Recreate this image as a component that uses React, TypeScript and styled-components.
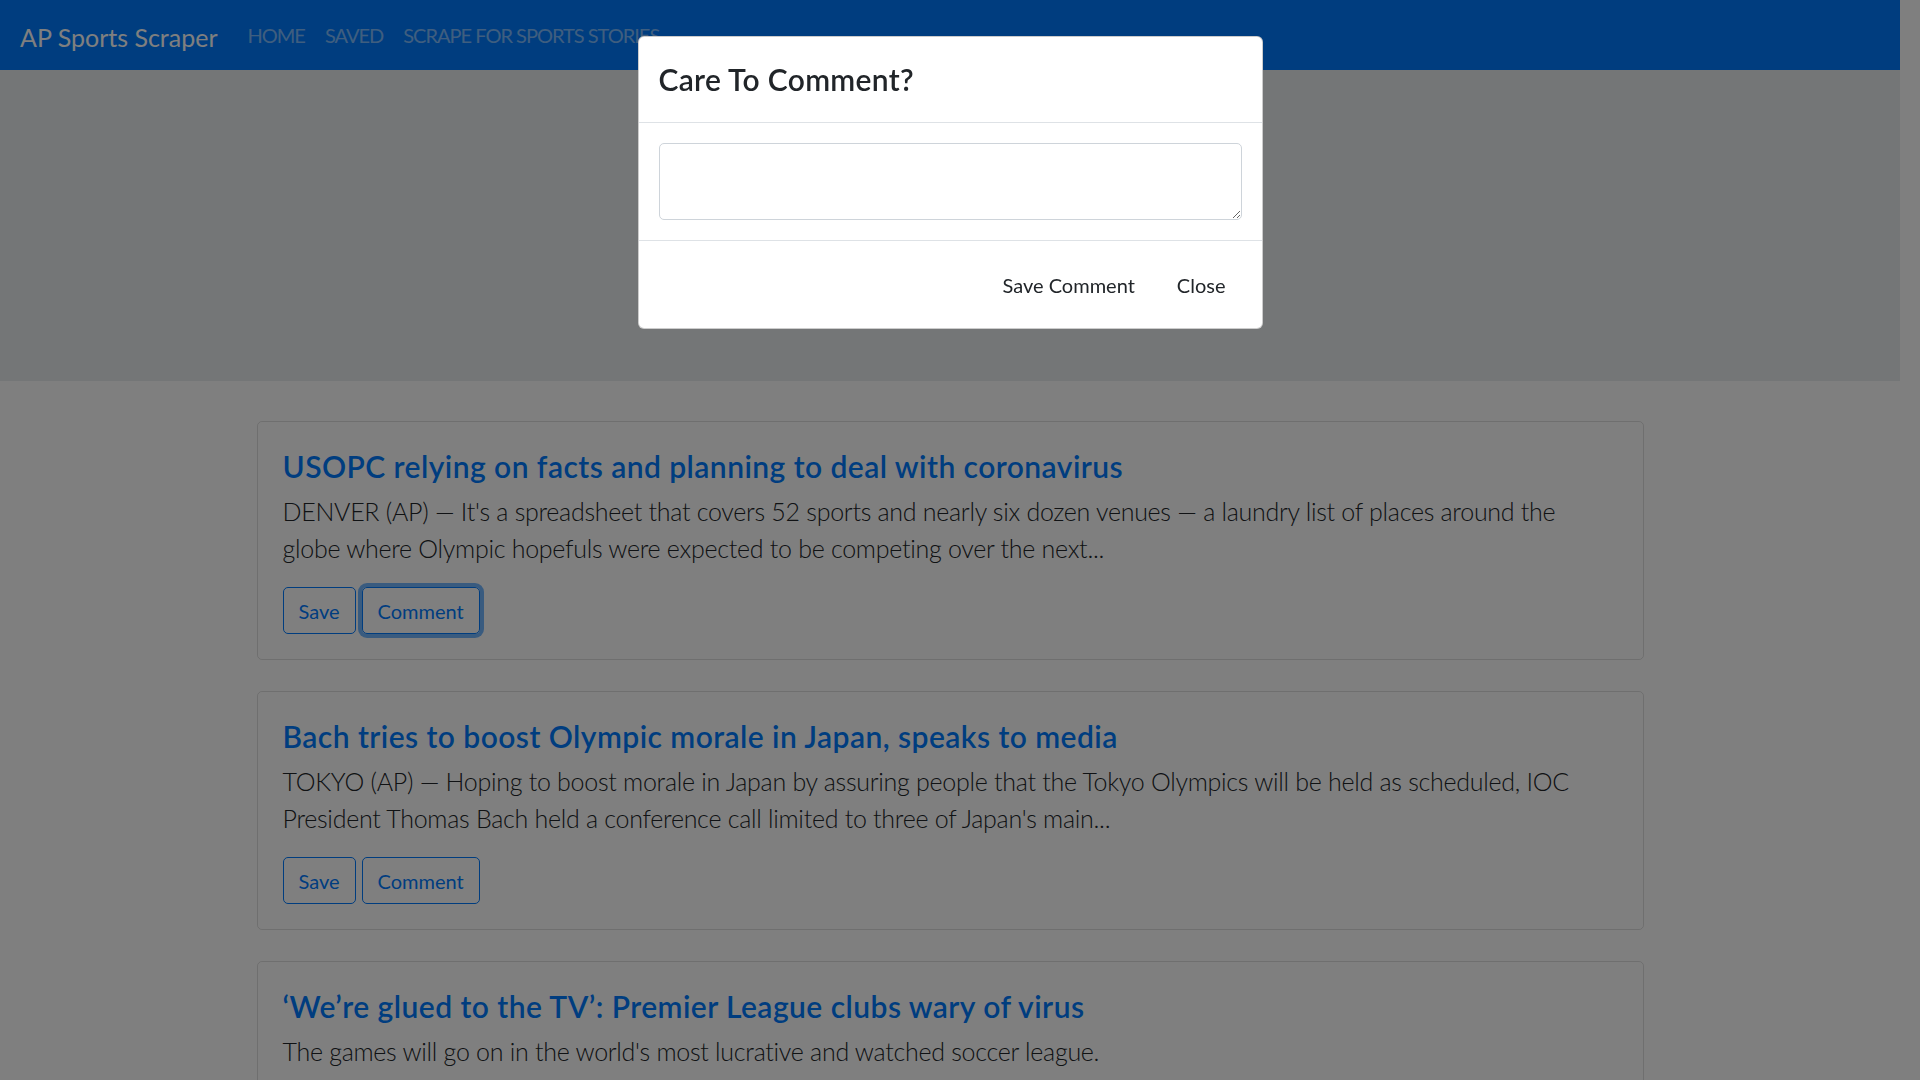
import React from 'react'
import styled, { createGlobalStyle } from 'styled-components'

const GlobalStyle = createGlobalStyle`
  html, body {
    margin: 0;
  }
  body {
    padding-right: 20px;
    overflow: hidden;
    background-color: #fff;
    color: #212529;
    font-family: Lato, 'Open Sans', sans-serif;
    font-size: 20px;
    line-height: 1.5;
  }
`

const stories = [
  {
    id: 1,
    title: 'USOPC relying on facts and planning to deal with coronavirus',
    summary:
      "DENVER (AP) — It's a spreadsheet that covers 52 sports and nearly six dozen venues — a laundry list of places around the globe where Olympic hopefuls were expected to be competing over the next...",
  },
  {
    id: 2,
    title: 'Bach tries to boost Olympic morale in Japan, speaks to media',
    summary:
      "TOKYO (AP) — Hoping to boost morale in Japan by assuring people that the Tokyo Olympics will be held as scheduled, IOC President Thomas Bach held a conference call limited to three of Japan's main...",
  },
  {
    id: 3,
    title: '‘We’re glued to the TV’: Premier League clubs wary of virus',
    summary: "The games will go on in the world's most lucrative and watched soccer league.",
  },
]

const App = () => {
  return (
    <>
      <GlobalStyle />
      <Navbar>
        <Brand href="#">AP Sports Scraper</Brand>
        <NavLink href="#">HOME</NavLink>
        <NavLink href="#">SAVED</NavLink>
        <NavLink href="#">SCRAPE FOR SPORTS STORIES</NavLink>
      </Navbar>
      <Jumbotron />
      <Container>
        {stories.map((item, index) => (
          <Card key={item.id}>
            <StoryTitle href="#">{item.title}</StoryTitle>
            <Lead>{item.summary}</Lead>
            <ButtonRow>
              <OutlineButton>Save</OutlineButton>
              <OutlineButton $focused={index === 0}>Comment</OutlineButton>
            </ButtonRow>
          </Card>
        ))}
      </Container>

      <Backdrop />
      <ModalWrap>
        <Dialog>
          <ModalHeader>
            <ModalTitle>Care To Comment?</ModalTitle>
          </ModalHeader>
          <ModalBody>
            <CommentBox rows={2} />
          </ModalBody>
          <ModalFooter>
            <PlainButton>Save Comment</PlainButton>
            <PlainButton>Close</PlainButton>
          </ModalFooter>
        </Dialog>
      </ModalWrap>
    </>
  )
}

const Navbar = styled.nav`
  display: flex;
  align-items: center;
  height: 70px;
  box-sizing: border-box;
  padding: 10px 20px;
  background-color: #007bff;
`

const Brand = styled.a`
  font-size: 25px;
  line-height: 37.5px;
  padding: 9px 0 3px;
  margin-right: 20px;
  color: #fff;
  text-decoration: none;
`

const NavLink = styled.a`
  font-size: 20px;
  line-height: 30px;
  padding: 10px;
  letter-spacing: -1px;
  color: rgba(255, 255, 255, 0.5);
  text-decoration: none;
`

const Jumbotron = styled.div`
  height: 311px;
  margin-bottom: 40px;
  background-color: #e9ecef;
`

const Container = styled.div`
  max-width: 1425px;
  box-sizing: border-box;
  padding: 0 19px;
  margin: 0 auto;
`

const Card = styled.div`
  border: 1px solid rgba(0, 0, 0, 0.125);
  border-radius: 5px;
  padding: 25px;
  margin-bottom: 31px;
`

const StoryTitle = styled.a`
  display: block;
  font-size: 30px;
  font-weight: 600;
  letter-spacing: 0.45px;
  line-height: 36px;
  margin: 1px 0 9px;
  color: #007bff;
  text-decoration: none;
`

const Lead = styled.p`
  font-size: 25px;
  font-weight: 300;
  letter-spacing: -0.28px;
  line-height: 36.5px;
  margin: 0 0 21px;
`

const ButtonRow = styled.div`
  display: flex;
  gap: 6px;
`

const OutlineButton = styled.button<{ $focused?: boolean }>`
  font-family: inherit;
  font-size: 20px;
  line-height: 30px;
  padding: 7.5px 15px;
  border: 1px solid #007bff;
  border-radius: 5px;
  background: transparent;
  color: #007bff;
  box-shadow: ${(p) => (p.$focused ? '0 0 0 4px rgba(0, 123, 255, 0.55)' : 'none')};
`

const Backdrop = styled.div`
  position: fixed;
  inset: 0;
  z-index: 1040;
  background-color: rgba(0, 0, 0, 0.5);
`

const ModalWrap = styled.div`
  position: fixed;
  inset: 0;
  z-index: 1050;
  padding-right: 20px;
  display: flex;
  justify-content: center;
  align-items: flex-start;
`

const Dialog = styled.div`
  width: 625px;
  margin-top: 36px;
  box-sizing: border-box;
  background-color: #fff;
  border: 1px solid rgba(0, 0, 0, 0.2);
  border-radius: 6px;
`

const ModalHeader = styled.div`
  padding: 20px;
  border-bottom: 1px solid #dee2e6;
`

const ModalTitle = styled.h4`
  margin: 0;
  font-size: 30px;
  font-weight: 600;
  letter-spacing: 0.3px;
  line-height: 45px;
`

const ModalBody = styled.div`
  padding: 20px;
`

const CommentBox = styled.textarea`
  display: block;
  width: 100%;
  height: 77px;
  box-sizing: border-box;
  padding: 7.5px 15px;
  font-family: inherit;
  font-size: 20px;
  line-height: 30px;
  color: #495057;
  border: 1px solid #ced4da;
  border-radius: 5px;
  resize: vertical;
`

const ModalFooter = styled.div`
  display: flex;
  justify-content: flex-end;
  align-items: center;
  padding: 15px;
  border-top: 1px solid #dee2e6;
`

const PlainButton = styled.button`
  margin: 5px;
  padding: 7.5px 15px;
  font-family: inherit;
  font-size: 20px;
  line-height: 30px;
  color: #212529;
  background: transparent;
  border: 1px solid transparent;
  border-radius: 5px;
`

export default App
